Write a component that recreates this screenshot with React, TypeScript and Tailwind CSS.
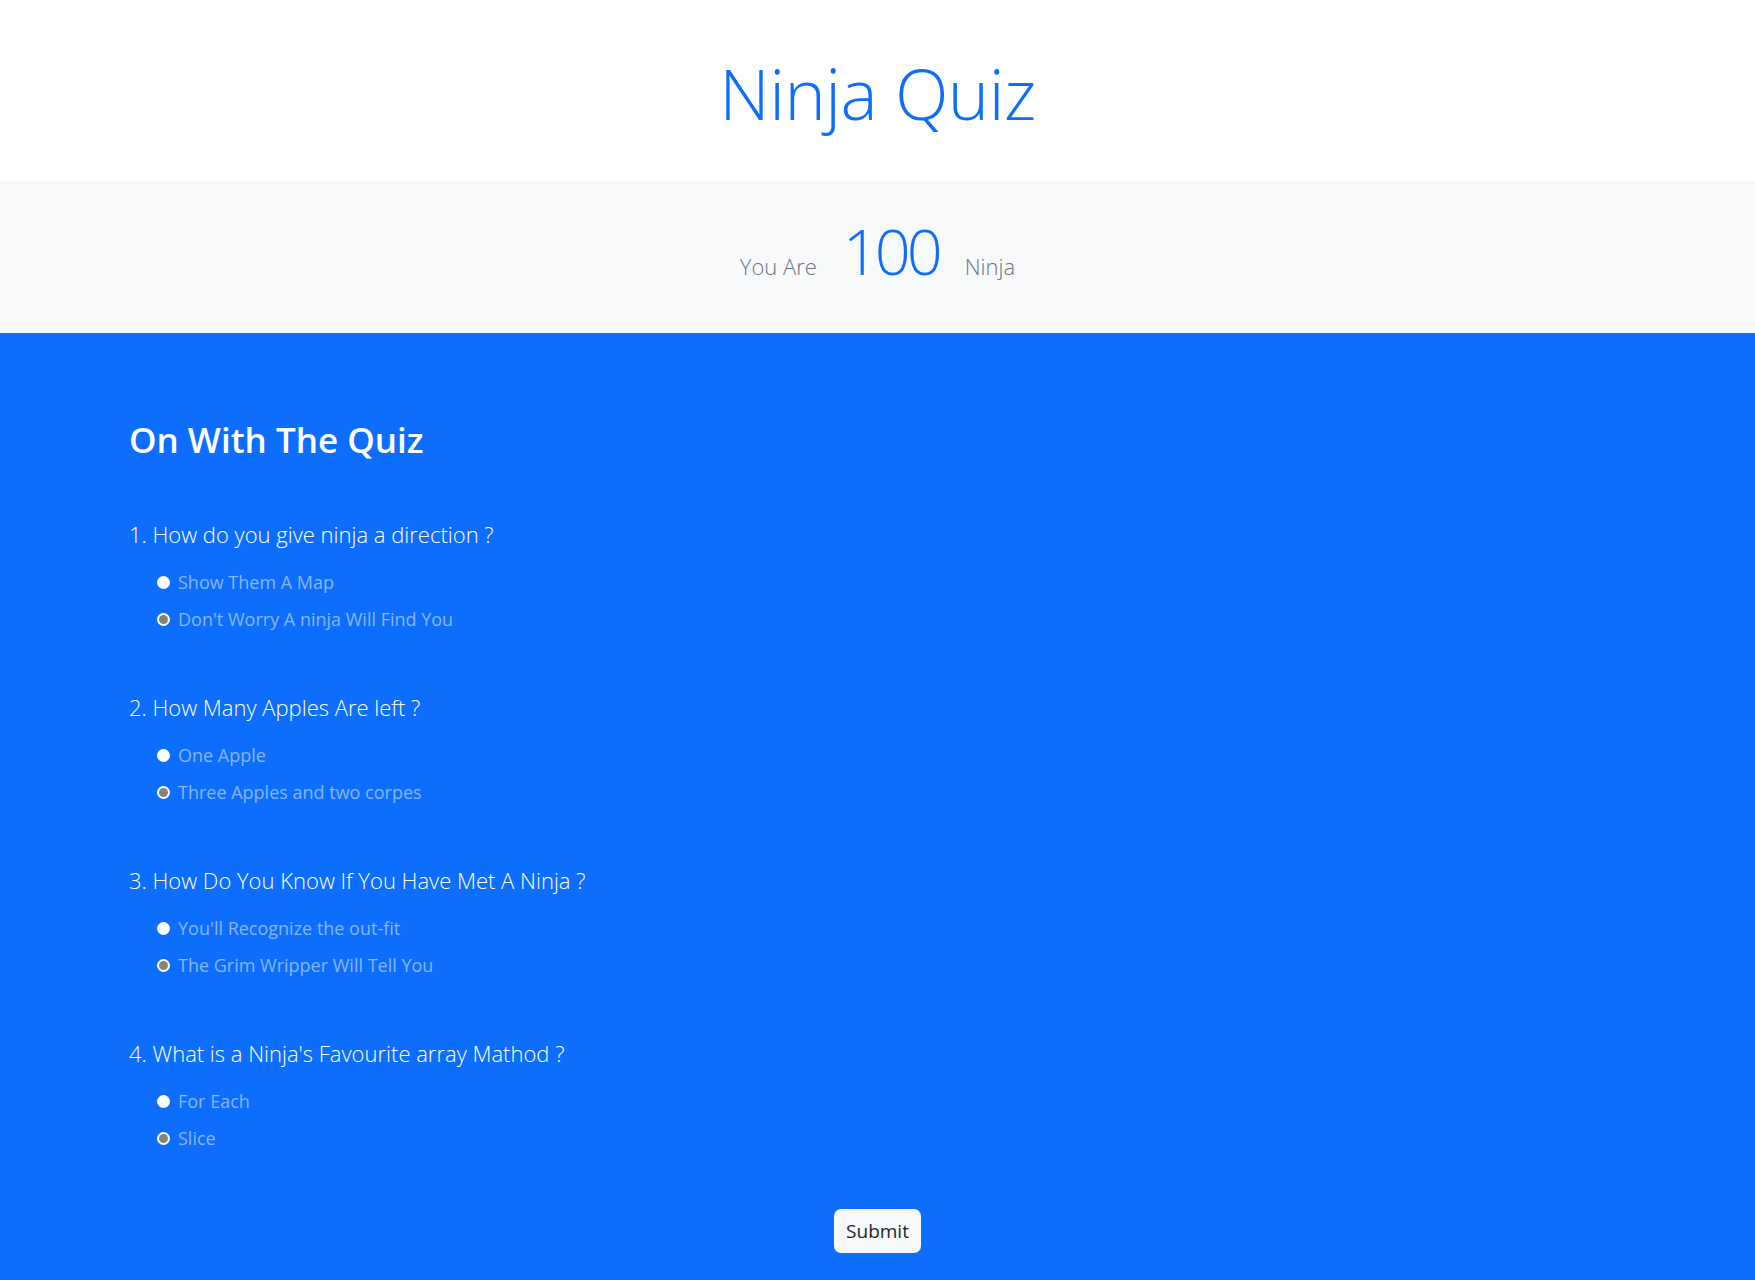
import React from 'react';

const questions = [
  {
    q: '1. How do you give ninja a direction ?',
    a: ['Show Them A Map', "Don't Worry A ninja Will Find You"],
  },
  {
    q: '2. How Many Apples Are left ?',
    a: ['One Apple', 'Three Apples and two corpes'],
  },
  {
    q: '3. How Do You Know If You Have Met A Ninja ?',
    a: ["You'll Recognize the out-fit", 'The Grim Wripper Will Tell You'],
  },
  {
    q: "4. What is a Ninja's Favourite array Mathod ?",
    a: ['For Each', 'Slice'],
  },
];

function Radio({ checked }: { checked: boolean }) {
  return checked ? (
    <span className="w-[13px] h-[13px] rounded-full bg-white flex items-center justify-center shrink-0">
      <span className="w-[9px] h-[9px] rounded-full bg-[#858576]" />
    </span>
  ) : (
    <span className="w-[13px] h-[13px] rounded-full bg-white shrink-0" />
  );
}

export default function App() {
  return (
    <main className="min-h-screen bg-[#0d6efd] font-['Open_Sans',sans-serif]">
      {/* header */}
      <div className="h-[181px] bg-white flex items-center justify-center">
        <h1 className="text-[70px] font-light text-[#0d6efd] leading-none tracking-[-0.5px] pt-[4px]">Ninja Quiz</h1>
      </div>

      {/* score band */}
      <div className="h-[152px] bg-[#f8f9fa] flex items-baseline justify-center pt-[38px]">
        <span className="text-[22px] font-light text-[#6c757d]">You Are</span>
        <span className="text-[63px] font-light text-[#0d6efd] leading-none mx-[26px] tracking-[-4px]">100</span>
        <span className="text-[22px] font-light text-[#6c757d]">Ninja</span>
      </div>

      {/* quiz */}
      <div className="pl-[129px] pt-[86px] pb-[56px]">
        <h3 className="text-[35px] font-semibold text-white leading-[42px]">On With The Quiz</h3>

        <div className="mt-[55px] flex flex-col gap-[55px]">
          {questions.map((item, i) => (
            <div key={i}>
              <p className="text-[22px] font-light text-white leading-[37px]">{item.q}</p>
              <div className="mt-[14px] pl-[28px] flex flex-col gap-[7px]">
                {item.a.map((opt, j) => (
                  <label key={j} className="flex items-center gap-[8px] h-[30px] text-[18px] text-[#86b6fe]">
                    <Radio checked={j === 1} />
                    <span>{opt}</span>
                  </label>
                ))}
              </div>
            </div>
          ))}
        </div>
      </div>

      <div className="flex justify-center pb-[26px]">
        <button className="w-[87px] h-[44px] rounded-[7px] bg-[#f8f9fa] text-[#212529] text-[19px]">Submit</button>
      </div>
    </main>
  );
}
